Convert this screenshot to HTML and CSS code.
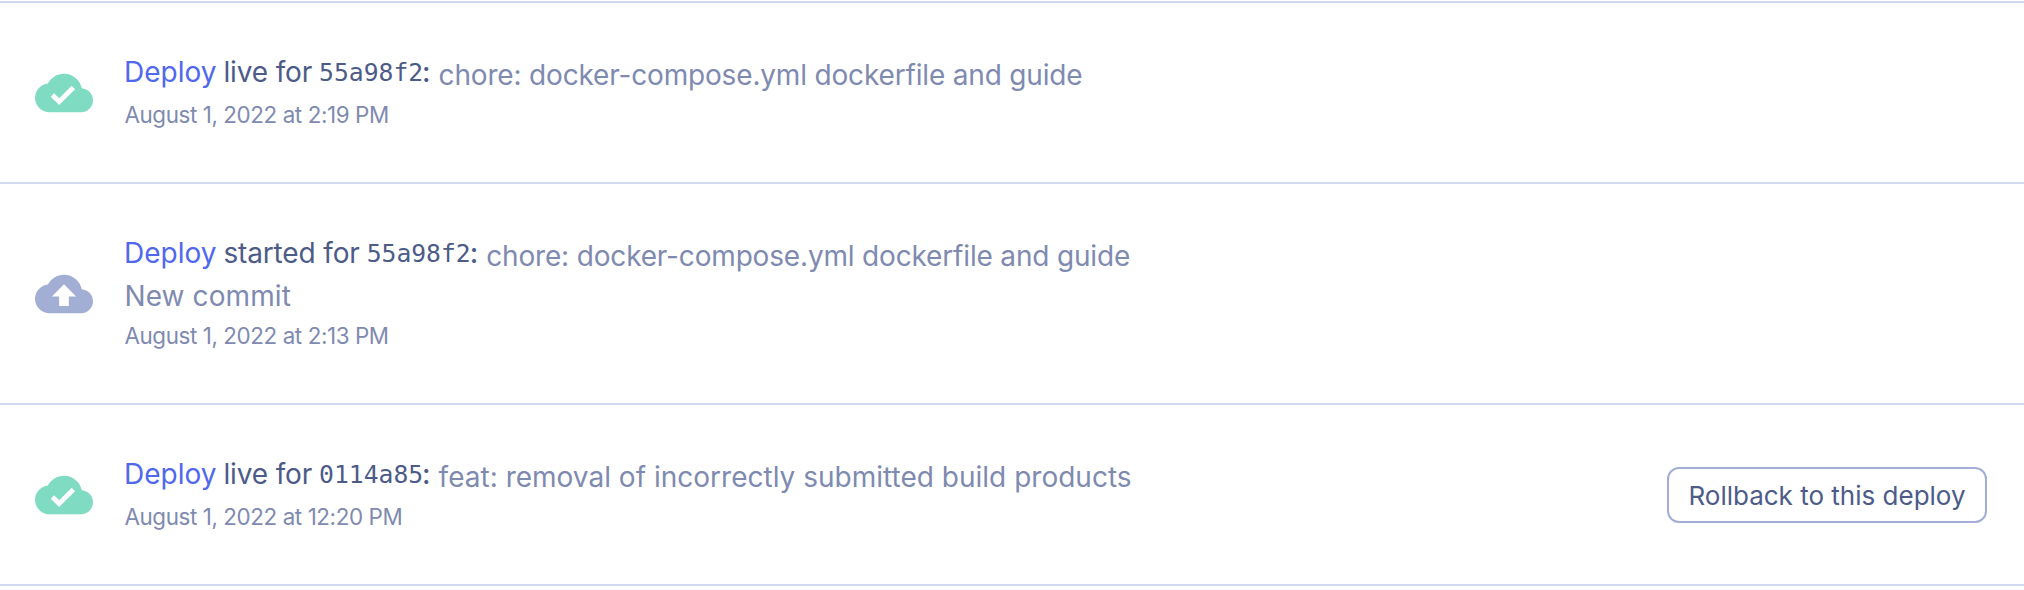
FILE: index.html
```html
<!DOCTYPE html>
<html lang="en">
<head>
<meta charset="utf-8">
<title>Deploy events</title>
<link rel="stylesheet" href="styles.css">
</head>
<body>
<ul class="events">
  <li class="event">
    <svg class="icon live" viewBox="0 0 24 24"><path d="M19.35 10.04C18.67 6.59 15.64 4 12 4 9.11 4 6.6 5.64 5.35 8.04 2.34 8.36 0 10.91 0 14c0 3.31 2.69 6 6 6h13c2.76 0 5-2.24 5-5 0-2.64-2.05-4.78-4.65-4.96zM10 17l-3.5-3.5 1.41-1.41L10 14.17 15.18 9l1.41 1.41L10 17z"/></svg>
    <div class="body">
      <div class="title"><a class="link">Deploy</a><span class="status">live for</span><code class="hash">55a98f2</code><span class="colon">:</span><span class="message">chore: docker-compose.yml dockerfile and guide</span></div>
      <div class="date">August 1, 2022 at 2:19 PM</div>
    </div>
  </li>
  <li class="event tall">
    <svg class="icon started" viewBox="0 0 24 24"><path d="M19.35 10.04C18.67 6.59 15.64 4 12 4 9.11 4 6.6 5.64 5.35 8.04 2.34 8.36 0 10.91 0 14c0 3.31 2.69 6 6 6h13c2.76 0 5-2.24 5-5 0-2.64-2.05-4.78-4.65-4.96zM14 13v4h-4v-4H7l5-5 5 5h-3z"/></svg>
    <div class="body">
      <div class="title"><a class="link">Deploy</a><span class="status">started for</span><code class="hash">55a98f2</code><span class="colon">:</span><span class="message">chore: docker-compose.yml dockerfile and guide</span></div>
      <div class="reason">New commit</div>
      <div class="date">August 1, 2022 at 2:13 PM</div>
    </div>
  </li>
  <li class="event">
    <svg class="icon live" viewBox="0 0 24 24"><path d="M19.35 10.04C18.67 6.59 15.64 4 12 4 9.11 4 6.6 5.64 5.35 8.04 2.34 8.36 0 10.91 0 14c0 3.31 2.69 6 6 6h13c2.76 0 5-2.24 5-5 0-2.64-2.05-4.78-4.65-4.96zM10 17l-3.5-3.5 1.41-1.41L10 14.17 15.18 9l1.41 1.41L10 17z"/></svg>
    <div class="body">
      <div class="title"><a class="link">Deploy</a><span class="status">live for</span><code class="hash">0114a85</code><span class="colon">:</span><span class="message wide">feat: removal of incorrectly submitted build products</span></div>
      <div class="date">August 1, 2022 at 12:20 PM</div>
    </div>
    <button class="rollback">Rollback to this deploy</button>
  </li>
</ul>
</body>
</html>
```
FILE: styles.css
```css
* { box-sizing: border-box; }
body { margin: 0; background: #fff; font-family: Inter, "Liberation Sans", sans-serif; overflow: hidden; }
.events { margin: 1px 0 0; padding: 0; list-style: none; border-bottom: 2px solid #d1daed; }
.event { display: flex; align-items: center; height: 181px; padding: 0 37px 0 35px; border-top: 2px solid #d1daed; }
.tall { height: 221px; }
.icon { flex: none; width: 58px; height: 58px; }
.live { fill: #80dbc3; }
.started { fill: #a3aed4; }
.body { align-self: flex-start; flex: 1; padding: 49px 0 0 31px; color: #7f8ab0; white-space: nowrap; }
.title { display: flex; height: 42px; align-items: flex-start; font-size: 28px; line-height: 40px; color: #4d5b89; }
.tall .title { height: 40px; }
.link { color: #4f68ee; margin-right: 7px; }
.status { letter-spacing: -0.15px; }
.hash { margin: 1px 0 0 7px; font: 24.7px/40px "DejaVu Sans Mono", monospace; }
.colon { margin-left: -1px; font-weight: 500; }
.message { margin: 3px 0 0 8px; color: #7f8ab0; letter-spacing: -0.17px; }
.wide { letter-spacing: 0.01px; }
.reason { height: 42px; padding-left: 0.5px; font-size: 28px; line-height: 46px; letter-spacing: 0.1px; }
.date { padding-left: 0.5px; font-size: 22.4px; line-height: 42px; letter-spacing: -0.41px; }
.rollback { width: 320px; height: 56px; padding: 1px 0 0; border: 2px solid #a3aed6; border-radius: 12px; background: #fff; color: #4d5b89; font: 26px/51px Inter, sans-serif; }
```
